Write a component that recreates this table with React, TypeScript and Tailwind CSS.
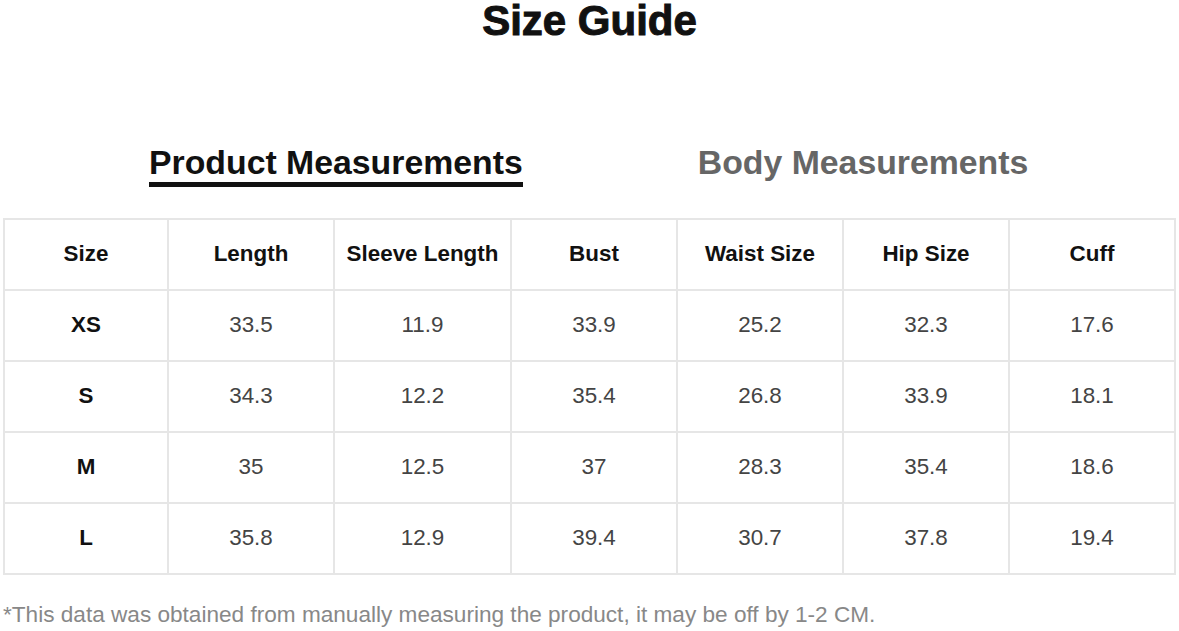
import React from 'react';

interface SizeRow {
  size: string;
  values: string[];
}

const headers = ['Size', 'Length', 'Sleeve Length', 'Bust', 'Waist Size', 'Hip Size', 'Cuff'];

const rows: SizeRow[] = [
  { size: 'XS', values: ['33.5', '11.9', '33.9', '25.2', '32.3', '17.6'] },
  { size: 'S', values: ['34.3', '12.2', '35.4', '26.8', '33.9', '18.1'] },
  { size: 'M', values: ['35', '12.5', '37', '28.3', '35.4', '18.6'] },
  { size: 'L', values: ['35.8', '12.9', '39.4', '30.7', '37.8', '19.4'] },
];

const cell = 'h-[71px] flex items-center justify-center border-r-2 border-b-2 border-[#e6e6e6] text-[22.4px] leading-none';

const App = () => {
  return (
    <div className="w-[1179px] h-[631px] bg-white overflow-hidden pt-[3px] font-['Liberation_Sans',Arial,sans-serif]">
      <h1 className="text-center text-[42px] leading-[36px] font-bold text-[#111] [-webkit-text-stroke:1px_#111]">
        Size Guide
      </h1>

      {/* tabs */}
      <div className="flex items-start pl-[149px] gap-[175px] mt-[107px]">
        <div className="text-[33.8px] leading-none font-bold text-[#111] pb-[2px] border-b-[5px] border-[#111]">
          Product Measurements
        </div>
        <div className="text-[33.8px] leading-none font-bold text-[#666]">
          Body Measurements
        </div>
      </div>

      {/* table */}
      <div className="ml-[3px] mt-[31px] w-[1173px] grid grid-cols-[164px_166px_177px_166px_166px_166px_166px] border-t-2 border-l-2 border-[#e6e6e6]">
        {headers.map((h) => (
          <div key={h} className={`${cell} font-bold text-[#111]`}>
            {h}
          </div>
        ))}
        {rows.map((row) => (
          <React.Fragment key={row.size}>
            <div className={`${cell} font-bold text-[#111]`}>{row.size}</div>
            {row.values.map((v, i) => (
              <div key={i} className={`${cell} text-[#444]`}>
                {v}
              </div>
            ))}
          </React.Fragment>
        ))}
      </div>

      <p className="ml-[3px] mt-[29px] text-[22.6px] leading-none text-[#888]">
        *This data was obtained from manually measuring the product, it may be off by 1-2 CM.
      </p>
    </div>
  );
};

export default App;
